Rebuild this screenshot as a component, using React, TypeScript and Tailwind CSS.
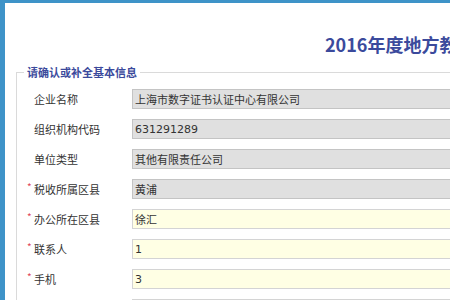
import React from 'react';

type Field = {
  label: string;
  value: string;
  required?: boolean;
  editable?: boolean;
};

const FIELDS: Field[] = [
  { label: '企业名称', value: '上海市数字证书认证中心有限公司' },
  { label: '组织机构代码', value: '631291289' },
  { label: '单位类型', value: '其他有限责任公司' },
  { label: '税收所属区县', value: '黄浦', required: true },
  { label: '办公所在区县', value: '徐汇', required: true, editable: true },
  { label: '联系人', value: '1', required: true, editable: true },
  { label: '手机', value: '3', required: true, editable: true },
  // next row: only the top of its box shows at the bottom edge
  { label: '', value: '', editable: true },
];

export default function App() {
  return (
    <div className="w-[450px] h-[300px] overflow-hidden bg-white border-l-[5px] border-t-[3px] border-[#3e93c8] font-['Noto_Sans_CJK_SC',sans-serif] text-[#333]">
      {/* Page title */}
      <div className="h-[62px] pt-[30px] pl-[320px] whitespace-nowrap">
        <h1 className="text-[18px] leading-[22px] font-bold text-[#3b4a9c]">
          2016年度地方教育附加专项资金申报
        </h1>
      </div>

      {/* Basic info */}
      <fieldset className="ml-[11px] w-[600px] border-l border-t border-[#dadada]">
        <legend className="ml-[7px] px-[3px] text-[11px] leading-[14px] font-bold text-[#3b4a9c]">
          请确认或补全基本信息
        </legend>

        <div className="pt-[5px] grid grid-cols-[115px_400px] auto-rows-[30px] items-center">
          {FIELDS.map((field, i) => (
            <React.Fragment key={i}>
              <label className="pl-[10px] flex items-center text-[11px] leading-[14px] whitespace-nowrap">
                <span className="w-[7px] text-[10px] leading-none text-[#e0485a] self-start">
                  {field.required ? '*' : ''}
                </span>
                {field.label}
              </label>
              <input
                readOnly
                value={field.value}
                className={`h-[20px] w-full pl-[2px] text-[11px] text-[#333] font-['DejaVu_Sans','Noto_Sans_CJK_SC',sans-serif] outline-none border ${
                  field.editable
                    ? 'bg-[#ffffe4] border-[#d4d4d4]'
                    : 'bg-[#e0e0e0] border-[#c4c4c4]'
                }`}
              />
            </React.Fragment>
          ))}
        </div>
      </fieldset>
    </div>
  );
}
